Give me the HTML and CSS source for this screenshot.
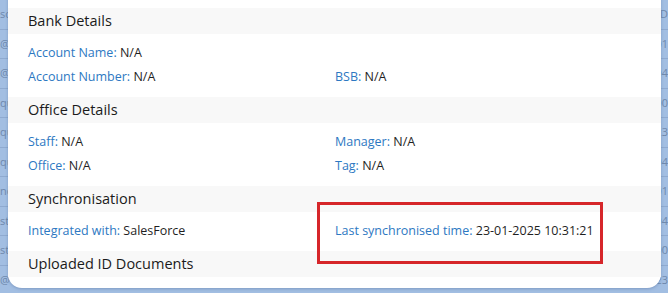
FILE: index.html
```html
<!DOCTYPE html>
<html lang="en">
<head>
  <meta charset="UTF-8">
  <meta name="viewport" content="width=device-width, initial-scale=1.0">
  <link rel="stylesheet" href="styles.css">
  <title>Client Details</title>
</head>
<body>
  <div class="backdrop">
    <div class="bg-row"><span>sc</span><span>D</span></div>
    <div class="bg-row"><span>@t</span><span>01</span></div>
    <div class="bg-row"><span>@b</span><span>04</span></div>
    <div class="bg-row"><span>qu</span><span>00</span></div>
    <div class="bg-row"><span>qu</span><span>23</span></div>
    <div class="bg-row"><span>qu</span><span>04</span></div>
    <div class="bg-row"><span>nc</span><span>01</span></div>
    <div class="bg-row"><span>st</span><span>04</span></div>
    <div class="bg-row"><span>st</span><span>00</span></div>
    <div class="bg-row"><span>@</span><span>23</span></div>
  </div>

  <div class="modal">
    <div class="section-title">Bank Details</div>
    <div class="section-body">
      <div class="field"><span class="label">Account Name:</span> N/A</div>
      <div class="field"></div>
      <div class="field"><span class="label">Account Number:</span> N/A</div>
      <div class="field"><span class="label">BSB:</span> N/A</div>
    </div>

    <div class="section-title">Office Details</div>
    <div class="section-body">
      <div class="field"><span class="label">Staff:</span> N/A</div>
      <div class="field"><span class="label">Manager:</span> N/A</div>
      <div class="field"><span class="label">Office:</span> N/A</div>
      <div class="field"><span class="label">Tag:</span> N/A</div>
    </div>

    <div class="section-title">Synchronisation</div>
    <div class="section-body">
      <div class="field"><span class="label">Integrated with:</span> SalesForce</div>
      <div class="field"><span class="label">Last synchronised time:</span> 23-01-2025 10:31:21</div>
    </div>

    <div class="section-title">Uploaded ID Documents</div>

    <div class="highlight"></div>
  </div>
</body>
</html>
```

FILE: styles.css
```css
* {
  box-sizing: border-box;
}

body {
  margin: 0;
  width: 668px;
  height: 293px;
  overflow: hidden;
  background-color: #a2bee2;
  font-family: "Open Sans", sans-serif;
  position: relative;
}

/* faded table behind the modal */
.bg-row {
  display: flex;
  justify-content: space-between;
  height: 29.5px;
  line-height: 12px;
  padding-top: 8px;
  border-bottom: 1px solid #8faad0;
  font-size: 11px;
  color: #6f89ad;
}

/* modal on top */
.modal {
  position: absolute;
  top: -12px;
  left: 8px;
  width: 653px;
  padding: 20px 0 11px 0;
  background-color: #ffffff;
  border-radius: 0 0 14px 14px;
  box-shadow: 0 1px 3px rgba(60, 90, 140, 0.35);
}

.section-title {
  height: 26px;
  line-height: 26px;
  padding-left: 20px;
  background-color: #f8f8f8;
  font-size: 14.5px;
  font-weight: 500;
  color: #1b1b1b;
}

.section-body {
  display: grid;
  grid-template-columns: 307px 1fr;
  padding: 7px 20px 8px 20px;
}

.field {
  height: 24px;
  line-height: 24px;
  font-size: 12.5px;
  color: #1f1f1f;
}

.label {
  color: #2d78c2;
}

.highlight {
  position: absolute;
  left: 309px;
  top: 214px;
  width: 286px;
  height: 62px;
  border: 3px solid #d6262a;
}
```
